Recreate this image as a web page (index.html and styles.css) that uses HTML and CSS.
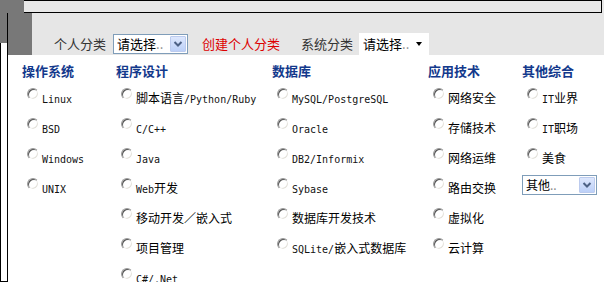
FILE: index.html
```html
<!DOCTYPE html>
<html>
<head>
<meta charset="utf-8">
<link rel="stylesheet" href="styles.css">
</head>
<body>
<div class="page">
  <div class="side">
    <div class="side-top"></div>
    <div class="side-rest"></div>
  </div>
  <div class="main">
    <div class="hdr">
      <div class="hdr-gray"></div>
      <div class="hdr-box"></div>
    </div>
    <div class="panel">
      <div class="bar">
        <div class="bar-gray"></div>
        <div class="bar-row">
          <span class="lbl">个人分类</span>
          <div class="xsel sel1">
            <span class="xsel-text">请选择<span class="dots">..</span></span>
            <span class="xsel-btn"><svg width="14" height="14" viewBox="0 0 14 14"><polyline points="3.5,5 7,8.5 10.5,5" fill="none" stroke="#4d6185" stroke-width="2"/></svg></span>
          </div>
          <span class="create">创建个人分类</span>
          <span class="lbl lbl-sys">系统分类</span>
          <div class="plain-sel">
            <span class="plain-text">请选择<span class="dots">..</span></span>
            <span class="tri"></span>
          </div>
        </div>
      </div>
      <div class="cats">
        <div class="col">
          <h3>操作系统</h3>
          <ul>
            <li><span class="r"></span><span class="t"><span class="en">Linux</span></span></li>
            <li><span class="r"></span><span class="t"><span class="en">BSD</span></span></li>
            <li><span class="r"></span><span class="t"><span class="en">Windows</span></span></li>
            <li><span class="r"></span><span class="t"><span class="en">UNIX</span></span></li>
          </ul>
        </div>
        <div class="col">
          <h3>程序设计</h3>
          <ul>
            <li><span class="r"></span><span class="t">脚本语言<span class="en">/Python/Ruby</span></span></li>
            <li><span class="r"></span><span class="t"><span class="en">C/C++</span></span></li>
            <li><span class="r"></span><span class="t"><span class="en">Java</span></span></li>
            <li><span class="r"></span><span class="t"><span class="en">Web</span>开发</span></li>
            <li><span class="r"></span><span class="t">移动开发／嵌入式</span></li>
            <li><span class="r"></span><span class="t">项目管理</span></li>
            <li><span class="r"></span><span class="t"><span class="en">C#/.Net</span></span></li>
          </ul>
        </div>
        <div class="col">
          <h3>数据库</h3>
          <ul>
            <li><span class="r"></span><span class="t"><span class="en">MySQL/PostgreSQL</span></span></li>
            <li><span class="r"></span><span class="t"><span class="en">Oracle</span></span></li>
            <li><span class="r"></span><span class="t"><span class="en">DB2/Informix</span></span></li>
            <li><span class="r"></span><span class="t"><span class="en">Sybase</span></span></li>
            <li><span class="r"></span><span class="t">数据库开发技术</span></li>
            <li><span class="r"></span><span class="t"><span class="en">SQLite/</span>嵌入式数据库</span></li>
          </ul>
        </div>
        <div class="col">
          <h3>应用技术</h3>
          <ul>
            <li><span class="r"></span><span class="t">网络安全</span></li>
            <li><span class="r"></span><span class="t">存储技术</span></li>
            <li><span class="r"></span><span class="t">网络运维</span></li>
            <li><span class="r"></span><span class="t">路由交换</span></li>
            <li><span class="r"></span><span class="t">虚拟化</span></li>
            <li><span class="r"></span><span class="t">云计算</span></li>
          </ul>
        </div>
        <div class="col">
          <h3>其他综合</h3>
          <ul>
            <li><span class="r"></span><span class="t"><span class="en">IT</span>业界</span></li>
            <li><span class="r"></span><span class="t"><span class="en">IT</span>职场</span></li>
            <li><span class="r"></span><span class="t">美食</span></li>
            <li class="sel-item">
              <div class="xsel sel3">
                <span class="xsel-text">其他<span class="dots">..</span></span>
                <span class="xsel-btn"><svg width="14" height="14" viewBox="0 0 14 14"><polyline points="3.5,5 7,8.5 10.5,5" fill="none" stroke="#4d6185" stroke-width="2"/></svg></span>
              </div>
            </li>
          </ul>
        </div>
      </div>
    </div>
  </div>
</div>
</body>
</html>
```
FILE: styles.css
```css
html, body {
  margin: 0;
  padding: 0;
  background: #fff;
}
body {
  width: 604px;
  height: 282px;
  overflow: hidden;
  font-family: "Noto Sans CJK SC", sans-serif;
}
.page {
  display: flex;
  height: 282px;
  overflow: hidden;
}
.side {
  width: 7px;
  flex-shrink: 0;
  display: flex;
  flex-direction: column;
}
.side-top {
  height: 43px;
  flex-shrink: 0;
  background: #787878;
}
.side-rest {
  flex: 1;
  border-left: 1px solid #000;
  border-bottom: 1px solid #000;
}
.main {
  flex: 1;
  display: flex;
  flex-direction: column;
  min-height: 0;
}
.hdr {
  height: 13px;
  flex-shrink: 0;
  display: flex;
  background: #e8e8e8;
}
.hdr-gray {
  width: 17px;
  background: #787878;
}
.hdr-box {
  flex: 1;
  margin-right: 2px;
  border: 1px solid #000;
  border-left: none;
  background: #e8e8e8;
}
.panel {
  flex: 1;
  min-height: 0;
  overflow: hidden;
  border-left: 1px solid #000;
  display: flex;
  flex-direction: column;
}
.bar {
  height: 42px;
  flex-shrink: 0;
  display: flex;
  background: #e6e6e6;
}
.bar-gray {
  width: 24px;
  background: #787878;
}
.bar-row {
  display: flex;
  align-items: center;
  padding: 21px 0 1px 22px;
  font-size: 13px;
  line-height: 18px;
  color: #333;
}
.lbl {
  width: 52px;
  margin-right: 7px;
  white-space: nowrap;
}
.lbl-sys {
  margin-right: 6px;
}
.create {
  color: #dd0000;
  margin: 0 21px 0 14px;
  white-space: nowrap;
}
.xsel {
  box-sizing: border-box;
  height: 20px;
  border: 1px solid #7f9db9;
  background: #fff;
  display: flex;
  align-items: center;
}
.sel1 {
  width: 75px;
}
.xsel-text {
  flex: 1;
  padding-left: 3px;
  color: #000;
  white-space: nowrap;
}
.xsel-btn {
  box-sizing: border-box;
  width: 16px;
  height: 16px;
  margin-right: 1px;
  border: 1px solid #bccbee;
  border-radius: 1px;
  background: linear-gradient(#dde7fd, #bcd0f8);
  display: flex;
  align-items: center;
  justify-content: center;
}
.dots {
  color: #8a8a8a;
}
.plain-sel {
  width: 70px;
  height: 22px;
  background: #fff;
  display: flex;
  align-items: center;
}
.plain-text {
  padding-left: 4px;
  color: #000;
  white-space: nowrap;
}
.tri {
  margin-left: auto;
  margin-right: 7px;
  width: 0;
  height: 0;
  border-left: 3.5px solid transparent;
  border-right: 3.5px solid transparent;
  border-top: 4px solid #000;
}
.cats {
  flex-shrink: 0;
  display: grid;
  grid-template-columns: 94px 156px 156px 94px 1fr;
  padding: 8px 0 0 14px;
}
.col h3 {
  margin: 0 0 4px;
  font-size: 13px;
  line-height: 16px;
  font-weight: bold;
  color: #13398c;
  white-space: nowrap;
}
.col ul {
  list-style: none;
  margin: 0;
  padding: 0;
}
.col li {
  height: 30px;
  display: flex;
  align-items: flex-start;
  font-size: 12px;
  color: #000;
  white-space: nowrap;
}
.r {
  flex-shrink: 0;
  box-sizing: border-box;
  width: 12px;
  height: 12px;
  margin: 5px 3px 0 5px;
  border-radius: 50%;
  border: 1px solid;
  border-color: #9a9a9a #fff #fff #9a9a9a;
  box-shadow: inset 1px 1px 0 #555, inset -1px -1px 0 #e4e2dc;
  background: #fff;
}
.t {
  line-height: 29px;
}
.en {
  font-family: "DejaVu Sans Mono", monospace;
  font-size: 10px;
  color: #111;
}
.sel-item {
  align-items: flex-start;
}
.sel3 {
  width: 75px;
  margin-top: 2px;
  font-size: 12px;
  line-height: 16px;
}
.sel3 .xsel-text {
  padding-left: 3px;
}
```
